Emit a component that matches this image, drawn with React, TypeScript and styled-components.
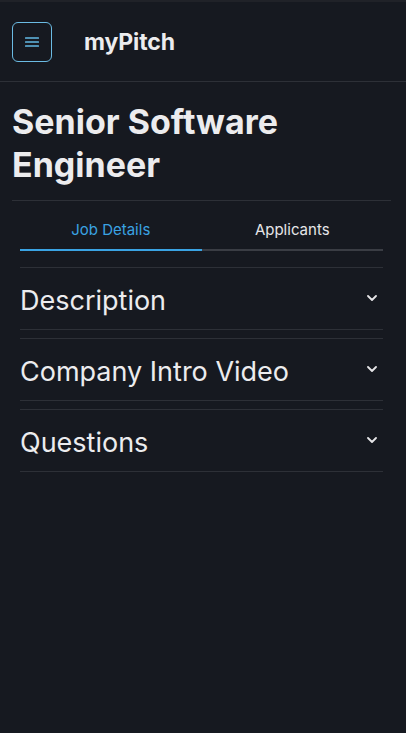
import React, { useState } from 'react';
import styled, { createGlobalStyle } from 'styled-components';

const GlobalStyle = createGlobalStyle`
  html, body {
    margin: 0;
    padding: 0;
    background: #161920;
    font-family: Inter, "Noto Sans", sans-serif;
    color: #ececee;
  }
  * {
    box-sizing: border-box;
  }
`;

const Page = styled.div`
  min-height: 733px;
  background: #161920;
  border-top: 2px solid #202228;
`;

const Header = styled.header`
  display: flex;
  align-items: center;
  height: 80px;
  padding: 0 12px;
  gap: 32px;
  border-bottom: 1px solid #2d3037;
`;

const MenuButton = styled.button`
  width: 40px;
  height: 40px;
  display: flex;
  align-items: center;
  justify-content: center;
  background: transparent;
  border: 1px solid #6bbbe3;
  border-radius: 6px;
  padding: 0;
  cursor: pointer;
`;

const Brand = styled.div`
  font-size: 23px;
  font-weight: 700;
  color: #ececee;
  letter-spacing: -0.1px;
`;

const Main = styled.main`
  padding: 0 15px 0 12px;
`;

const Title = styled.h1`
  margin: 0;
  padding: 18px 0 14px;
  font-size: 34px;
  line-height: 43px;
  font-weight: 700;
  color: #ececee;
  border-bottom: 1px solid #2d3037;
`;

const Body = styled.div`
  padding: 0 8px;
`;

const TabList = styled.div`
  display: flex;
  margin-top: 10px;
`;

const Tab = styled.button<{ $active?: boolean }>`
  flex: 1;
  height: 40px;
  background: transparent;
  border: none;
  border-bottom: 2px solid ${(p) => (p.$active ? '#3aa3e3' : '#3a3d44')};
  color: ${(p) => (p.$active ? '#3aa3e3' : '#e6e6e8')};
  font-family: Inter, sans-serif;
  font-size: 15px;
  padding: 0 0 2px;
  cursor: pointer;
`;

const Accordion = styled.div`
  margin-top: 16px;
  display: flex;
  flex-direction: column;
  gap: 8px;
`;

const Item = styled.div`
  border-top: 1px solid #2d3037;
  border-bottom: 1px solid #2d3037;
`;

const ItemHeader = styled.button`
  width: 100%;
  height: 61px;
  display: flex;
  align-items: center;
  justify-content: space-between;
  background: transparent;
  border: none;
  padding: 3px 6px 0 0;
  color: #ececee;
  font-family: Inter, sans-serif;
  font-size: 27px;
  font-weight: 400;
  cursor: pointer;
  text-align: left;
`;

const ChevronSvg = styled.svg`
  margin-top: -4px;
  flex-shrink: 0;
`;

const Chevron = () => (
  <ChevronSvg width="10" height="6" viewBox="0 0 10 6" fill="none">
    <polyline
      points="1 1 5 5 9 1"
      stroke="#e6e6e8"
      strokeWidth="1.8"
      strokeLinecap="round"
      strokeLinejoin="round"
    />
  </ChevronSvg>
);

const items = ['Description', 'Company Intro Video', 'Questions'];

export default function App() {
  const [tab, setTab] = useState('details');
  return (
    <>
      <GlobalStyle />
      <Page>
        <Header>
          <MenuButton aria-label="menu">
            <svg width="14" height="12" viewBox="0 0 14 12">
              <rect x="0" y="1" width="14" height="2" rx="0.5" fill="#4f91b3" />
              <rect x="0" y="5" width="14" height="2" rx="0.5" fill="#4f91b3" />
              <rect x="0" y="9" width="14" height="2" rx="0.5" fill="#4f91b3" />
            </svg>
          </MenuButton>
          <Brand>myPitch</Brand>
        </Header>
        <Main>
          <Title>Senior Software Engineer</Title>
          <Body>
            <TabList>
              <Tab $active={tab === 'details'} onClick={() => setTab('details')}>
                Job Details
              </Tab>
              <Tab $active={tab === 'applicants'} onClick={() => setTab('applicants')}>
                Applicants
              </Tab>
            </TabList>
            <Accordion>
              {items.map((label) => (
                <Item key={label}>
                  <ItemHeader>
                    {label}
                    <Chevron />
                  </ItemHeader>
                </Item>
              ))}
            </Accordion>
          </Body>
        </Main>
      </Page>
    </>
  );
}
